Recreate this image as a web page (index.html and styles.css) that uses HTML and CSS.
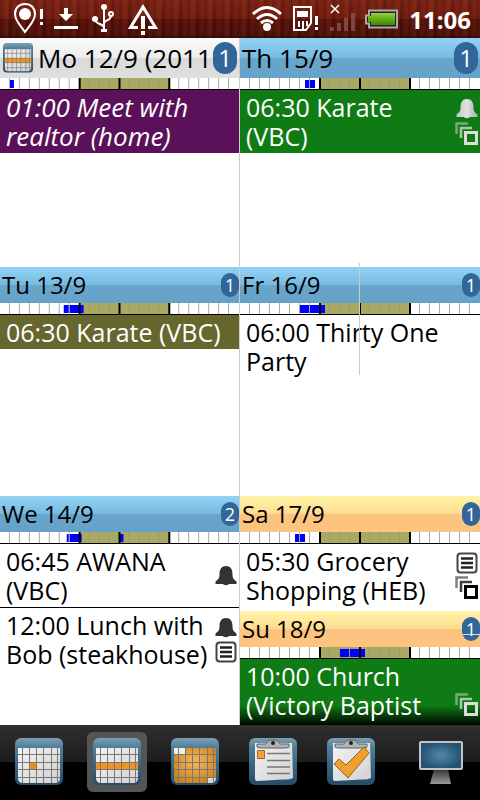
FILE: index.html
```
<!doctype html>
<html lang="en">
<head>
	<meta charset="utf-8">
	<meta name="viewport" content="width=device-width, initial-scale=1">
	<title>Week view</title>
	<link rel="stylesheet" href="styles.css">
</head>
<body>
	<!-- shared shapes -->
	<svg class="defs" aria-hidden="true">
		<defs>
			<linearGradient id="head" x1="0" y1="0" x2="0" y2="1"><stop offset="0" stop-color="#7ca0b5"/><stop offset=".2" stop-color="#4f7d98"/><stop offset="1" stop-color="#254c69"/></linearGradient>
			<linearGradient id="paper" x1="0" y1="0" x2="1" y2="1"><stop offset="0" stop-color="#f2f2f0"/><stop offset="1" stop-color="#d2d2d2"/></linearGradient>
			<radialGradient id="orange" cx=".5" cy=".4" r=".7"><stop offset="0" stop-color="#f9b856"/><stop offset="1" stop-color="#c97b15"/></radialGradient>
			<linearGradient id="bellLight" x1="0" y1="0" x2="1" y2="0"><stop offset="0" stop-color="#c4c4c4"/><stop offset=".5" stop-color="#e2e2e2"/><stop offset="1" stop-color="#aaa"/></linearGradient>
			<radialGradient id="screen"><stop offset="0" stop-color="#5488aa"/><stop offset="1" stop-color="#245273"/></radialGradient>
			<linearGradient id="metal" x1="0" y1="0" x2="0" y2="1"><stop offset="0" stop-color="#333"/><stop offset="1" stop-color="#999"/></linearGradient>
			<linearGradient id="charge" x1="0" y1="0" x2="0" y2="1"><stop offset="0" stop-color="#9ad23c"/><stop offset=".5" stop-color="#62ad18"/><stop offset="1" stop-color="#3f8a08"/></linearGradient>
			<symbol id="hours" viewBox="0 0 240 12" preserveAspectRatio="none">
				<path fill="#a9a961" d="M80 0h90v11H80z"/>
				<path fill="#8f8f8f" fill-opacity=".75" d="M9 0h1v11H9zM19 0h1v11h-1zM29 0h1v11h-1zM39 0h1v11h-1zM49 0h1v11h-1zM59 0h1v11h-1zM69 0h1v11h-1zM179 0h1v11h-1zM189 0h1v11h-1zM199 0h1v11h-1zM209 0h1v11h-1zM219 0h1v11h-1zM229 0h1v11h-1z"/>
				<path fill="#8f8f8f" fill-opacity=".6" d="M89 0h1v11h-1zM99 0h1v11h-1zM109 0h1v11h-1zM129 0h1v11h-1zM139 0h1v11h-1zM149 0h1v11h-1zM159 0h1v11h-1z"/>
			</symbol>
			<symbol id="marks" viewBox="0 0 240 12" preserveAspectRatio="none">
				<path d="M79 0h2v11h-2zM119 0h2v11h-2zM169 0h2v11h-2zM0 11h240v1H0z"/>
			</symbol>
			<symbol id="bell" viewBox="0 0 22 22"><path d="M11 1c4.500 0 6.500 3.500 6.500 8 0 3.500.5 5 4 7.500v2.500H14c-.5 1.500-5.500 1.500-6 0H.5v-2.500c3.500-2.500 4-4 4-7.500 0-4.500 2-8 6.500-8z"/></symbol>
			<symbol id="note" viewBox="0 0 22 22"><rect x="1.500" y="1.500" width="19" height="19" rx="3" fill="#fff" stroke="#444" stroke-width="2"/><path d="M5 6.500h12M5 11h12M5 15.500h12" stroke="#222" stroke-width="2.500"/></symbol>
			<symbol id="repeat" viewBox="0 0 24 24"><path d="M1.500 12V1.500H13" fill="none" stroke="currentColor" stroke-width="2.500" opacity=".5"/><path d="M6 16V6h11" fill="none" stroke="currentColor" stroke-width="2.500" opacity=".75"/><path d="M10.500 10.500h11v11h-11z" fill="none" stroke="currentColor" stroke-width="3"/></symbol>
			<symbol id="calendar" viewBox="0 0 48 48"><rect width="48" height="47" rx="6" fill="url(#head)"/><path d="M3 10h42v30q0 5-5 5H8q-5 0-5-5z" fill="url(#paper)"/></symbol>
			<symbol id="cells" viewBox="0 0 48 48"><path d="M3 16.500h42M3 24.500h42M3 31.500h42M3 39.500h42M7.500 10v35M14.500 10v35M21.500 10v35M28.500 10v35M36.500 10v35M42.500 10v35" stroke="#777" stroke-width="1" fill="none"/></symbol>
			<symbol id="clip" viewBox="0 0 48 48">
				<rect width="48" height="47" rx="6" fill="url(#head)"/>
				<path d="M6 5h37l1 35q-4 2-10 1.500L8 43q-2 0-2-2z" fill="url(#paper)"/>
				<path d="M8 9V6h9q1-4 7-4t7 4h9v3q-2 1-4 1H12q-3 0-4-1z" fill="#aeb3b6" stroke="#5d6366"/>
				<circle cx="24" cy="5" r="2" fill="#222"/>
			</symbol>
		</defs>
	</svg>

	<div class="status">
		<svg class="status-left" width="170" height="38" viewBox="0 0 170 38" aria-hidden="true">
			<path d="M25 4c-6 0-10 4-10 10 0 7 6 12 10 18 4-6 10-11 10-18 0-6-4-10-10-10z" fill="none" stroke="#fff" stroke-width="2"/>
			<circle cx="25" cy="14" r="6" fill="#fff"/>
			<path d="M40 9h3v10h-3zM40 22h3v3h-3zM54 26h24v3H54zM64 8h4v6h5l-7 7-7-7h5z" fill="#fff"/>
			<path d="M104 6v25M95 19c0 6 9 4 9 9M111 15c0 7-7 4-7 9" fill="none" stroke="#fff" stroke-width="2"/>
			<circle cx="104" cy="7" r="3" fill="#fff"/><circle cx="95" cy="19" r="3" fill="#fff"/><circle cx="111" cy="14" r="2" fill="none" stroke="#fff" stroke-width="2"/>
			<path d="M101 29h6v3h-6z" fill="#fff"/>
			<path d="M138 27.500h-7.500L143 7l12.500 20.500H148" fill="none" stroke="#fff" stroke-width="3"/>
			<path d="M141 16h4v13h-4zM141 31h4v4h-4z" fill="#fff"/>
		</svg>
		<svg class="status-right" width="152" height="38" viewBox="250 0 152 38" aria-hidden="true">
			<path d="M256 14q14-13 28 0M260 19q10-9 20 0M264 23q6-5 12 0" fill="none" stroke="#fff" stroke-width="3"/>
			<circle cx="270" cy="27" r="4" fill="#fff"/>
			<path d="M297 7h17v16l-5 7h-12z" fill="none" stroke="#fff" stroke-width="2"/>
			<path d="M300 11h11v6h-11zM301 21h2v6h-2zM305 21h2v8h-2zM309 21h2v5h-2zM318 16h3v9h-3zM318 27h3v3h-3z" fill="#fff"/>
			<path d="M334 5l8 8M342 5l-8 8" stroke="#fff" stroke-width="1.500"/>
			<path d="M333 27h4v4h-4zM340 23h4v8h-4zM347 18h4v13h-4zM354 13h4v18h-4z" fill="#8d5550" opacity=".75"/>
			<path d="M372 10.500h28v17h-28v-4h-3v-8h3z" fill="#222" stroke="#aaa" stroke-width="2"/>
			<path d="M374 13h24v12h-24v-3h-3v-6h3z" fill="url(#charge)"/>
		</svg>
		<time class="clock">11:06</time>
	</div>

	<main class="week">
		<section class="day">
			<header class="day-head today">
				<svg class="head-icon" width="30" height="30" viewBox="0 0 48 48" aria-hidden="true"><use href="#calendar"/><path d="M3 24h42v8H3z" fill="#f0931f"/><use href="#cells"/></svg>
				<h2 class="date">Mo 12/9 (2011</h2><span class="count">1</span>
			</header>
			<svg class="ruler" viewBox="0 0 240 12" preserveAspectRatio="none"><use href="#hours"/><path class="busy" d="M10 2h4v8h-4z"/><use href="#marks"/></svg>
			<article class="event purple"><p class="title">01:00 Meet with realtor (home)</p></article>
		</section>

		<section class="day">
			<header class="day-head large">
				<h2 class="date">Th 15/9</h2><span class="count">1</span>
			</header>
			<svg class="ruler" viewBox="0 0 240 12" preserveAspectRatio="none"><use href="#hours"/><path class="busy" d="M65 2h4v8h-4zM70 2h5v8h-5z"/><use href="#marks"/></svg>
			<article class="event green">
				<p class="title">06:30 Karate (VBC)</p>
				<div class="flags"><svg class="bell light"><use href="#bell"/></svg><svg class="repeat"><use href="#repeat"/></svg></div>
			</article>
		</section>

		<section class="day">
			<header class="day-head">
				<h2 class="date">Tu 13/9</h2><span class="count">1</span>
			</header>
			<svg class="ruler" viewBox="0 0 240 12" preserveAspectRatio="none"><use href="#hours"/><path class="busy" d="M64 2h5v8h-5zM70 2h14v8H70z"/><use href="#marks"/></svg>
			<article class="event olive"><p class="title">06:30 Karate (VBC)</p></article>
		</section>

		<section class="day marked">
			<header class="day-head">
				<h2 class="date">Fr 16/9</h2><span class="count">1</span>
			</header>
			<svg class="ruler" viewBox="0 0 240 12" preserveAspectRatio="none"><use href="#hours"/><path class="busy" d="M60 2h9v8h-9zM70 2h15v8H70z"/><use href="#marks"/></svg>
			<article class="event"><p class="title">06:00 Thirty One Party</p></article>
		</section>

		<section class="day">
			<header class="day-head">
				<h2 class="date">We 14/9</h2><span class="count">2</span>
			</header>
			<svg class="ruler" viewBox="0 0 240 12" preserveAspectRatio="none"><use href="#hours"/><path class="busy" d="M67 2h2v8h-2zM70 2h12v8H70zM120 2h4v8h-4z"/><use href="#marks"/></svg>
			<article class="event">
				<p class="title">06:45 AWANA (VBC)</p>
				<div class="flags"><svg class="bell"><use href="#bell"/></svg></div>
			</article>
			<article class="event">
				<p class="title">12:00 Lunch with Bob (steakhouse)</p>
				<div class="flags"><svg class="bell"><use href="#bell"/></svg><svg class="note"><use href="#note"/></svg></div>
			</article>
		</section>

		<div class="weekend">
			<section class="day">
				<header class="day-head warm">
					<h2 class="date">Sa 17/9</h2><span class="count">1</span>
				</header>
				<svg class="ruler" viewBox="0 0 240 12" preserveAspectRatio="none"><use href="#hours"/><path class="busy" d="M55 2h4v8h-4zM60 2h5v8h-5z"/><use href="#marks"/></svg>
				<article class="event">
					<p class="title">05:30 Grocery Shopping (HEB)</p>
					<div class="flags"><svg class="note"><use href="#note"/></svg><svg class="repeat"><use href="#repeat"/></svg></div>
				</article>
			</section>
			<section class="day">
				<header class="day-head warm">
					<h2 class="date">Su 18/9</h2><span class="count struck">1</span>
				</header>
				<svg class="ruler" viewBox="0 0 240 12" preserveAspectRatio="none"><use href="#hours"/><path class="busy" d="M100 2h9v8h-9zM110 2h15v8h-15z"/><use href="#marks"/></svg>
				<article class="event green fading">
					<p class="title">10:00 Church (Victory Baptist</p>
					<div class="flags low"><svg class="repeat"><use href="#repeat"/></svg></div>
				</article>
			</section>
		</div>
	</main>

	<nav class="toolbar">
		<button class="tool" type="button" aria-label="Day">
			<svg class="tool-icon" viewBox="0 0 48 48"><use href="#calendar"/><path d="M14 24h8v8h-8z" fill="#f08a1c"/><use href="#cells"/></svg>
		</button>
		<button class="tool active" type="button" aria-label="Week">
			<svg class="tool-icon" viewBox="0 0 48 48"><use href="#calendar"/><path d="M3 24h42v8H3z" fill="#f0931f"/><use href="#cells"/></svg>
		</button>
		<button class="tool" type="button" aria-label="Month">
			<svg class="tool-icon" viewBox="0 0 48 48"><use href="#calendar"/><path d="M14 10h31v29h-9v6H8q-5 0-5-5V17h11z" fill="url(#orange)"/><use href="#cells"/></svg>
		</button>
		<button class="tool" type="button" aria-label="Agenda">
			<svg class="tool-icon" viewBox="0 0 48 48"><use href="#clip"/><path d="M8.500 12.500h7v8h-7z" fill="#f0a040" stroke="#a5671d"/><path d="M18 15.500h23M18 22.500h23M18 29h23M18 35.500h23" stroke="#777" stroke-width="1.500"/></svg>
		</button>
		<button class="tool" type="button" aria-label="Tasks">
			<svg class="tool-icon" viewBox="0 0 48 48"><use href="#clip"/><path d="M7 26l5-5 7 6 18-18 5 6-21 25z" fill="#efa02f" stroke="#96601b" stroke-linejoin="round"/></svg>
		</button>
		<button class="tool last" type="button" aria-label="Display">
			<svg class="tool-icon" viewBox="0 0 48 48"><path d="M17 31h14l3 15H13z" fill="url(#metal)"/><rect x="3" y="4" width="42" height="27" rx="1" fill="url(#screen)" stroke="#c4c4c4" stroke-width="2"/></svg>
		</button>
	</nav>
</body>
</html>
```
FILE: styles.css
```
* { box-sizing: border-box; }
body {
	margin: 0; min-height: 100vh;
	display: flex; flex-direction: column;
	background: #000; color: #000;
	font-family: "Open Sans", "Noto Sans", sans-serif;
}
h2, p { margin: 0; font-weight: normal; }
svg { display: block; }
.defs { position: absolute; width: 0; height: 0; }

/* status bar */
.status {
	display: flex; align-items: center; height: 38px; padding-right: 9px;
	background:
		linear-gradient(rgba(255,110,70,.14), rgba(255,90,50,.08) 50%, rgba(0,0,0,.12) 51%, rgba(0,0,0,.2) 92%, rgba(0,0,0,.5)),
		repeating-linear-gradient(91deg, #5b150c 0 3px, #701d10 5px 8px, #4f1009 10px 11px, #67190e 14px 17px);
}
.status-right { margin-left: auto; }
.clock { margin-left: 10px; color: #fff; font-size: 24px; font-weight: bold; }

/* week grid */
.week {
	flex: 1; display: grid;
	grid-template-columns: 1fr 1fr; grid-template-rows: repeat(3, 1fr);
	background: #fff;
}
.day { min-width: 0; }
.week > .day:nth-child(odd) { border-right: 1px solid #ccc; }
.weekend { display: grid; grid-template-rows: 1fr 1fr; min-width: 0; }
.weekend .day { display: flex; flex-direction: column; }

.day-head {
	display: flex; align-items: center; height: 36px; padding-left: 2px;
	background: linear-gradient(#92d3f5, #78badf 50%, #69a6cc 50%, #66a1c8);
}
.date { flex: 1; min-width: 0; white-space: nowrap; font-size: 24px; line-height: 36px; }
.count {
	width: 18px; height: 24px; border-radius: 9px;
	background: #32659a; color: #fff;
	font-size: 18px; line-height: 24px; text-align: center;
}
.today, .large { height: 40px; }
.today { padding-left: 3px; background: linear-gradient(#fafafa, #ececec 50%, #d9d9d9 50%, #dfdfdf); }
.today .date, .large .date { font-size: 26px; }
.today .count, .large .count {
	width: 24px; height: 32px; margin-right: 2px; border-radius: 12px;
	font-size: 24px; line-height: 32px;
}
.head-icon { margin-right: 5px; }
.warm { background: linear-gradient(#fff5a8, #fedb90 50%, #fdc47f 50%, #fdc47f); }
.struck { background: linear-gradient(#32659a 17px, #d5dbe0 17px 18px, #32659a 18px); }

.ruler { width: 100%; height: 12px; background: #fff; }
.busy { fill: #00f; }

/* events */
.event { display: flex; padding: 3px 1px 2px 6px; }
.event + .event { border-top: 1px solid #000; }
.title { flex: 1; min-width: 0; font-size: 25px; line-height: 29px; }
.purple { background: #5b1159; color: #fff; }
.purple .title { font-size: 26px; font-style: italic; }
.green { background: #0f7b14; color: #fff; }
.olive { background: #66662f; color: #fff; }
.fading { flex: 1; background: linear-gradient(#0f7b14 70%, #021a03 95%, #000); }
.flags { display: flex; flex-direction: column; justify-content: center; align-items: center; gap: 2px; width: 24px; }
.low { justify-content: flex-end; padding-bottom: 6px; }
.bell, .note { width: 22px; height: 22px; }
.bell { fill: #333; }
.light { fill: url(#bellLight); }
.repeat { width: 24px; height: 24px; }
.green .repeat { color: #ddd; }

/* the divider line that crosses Friday */
.marked { position: relative; }
.marked::after {
	content: ""; position: absolute; left: 50%; top: -4px;
	width: 1px; height: 112px; margin-left: -1px; background: #ccc;
}

/* toolbar */
.toolbar {
	display: flex; gap: 18px; height: 75px; padding: 7px 9px 8px;
	background: linear-gradient(#2f2f2f, #1c1c1c 37px, #000 37px);
}
.tool { width: 60px; height: 60px; padding: 0; border: 0; border-radius: 6px; background: none; }
.active { background: #555; }
.last { margin-left: auto; }
.tool-icon { width: 48px; height: 48px; margin: 0 auto; }
```
